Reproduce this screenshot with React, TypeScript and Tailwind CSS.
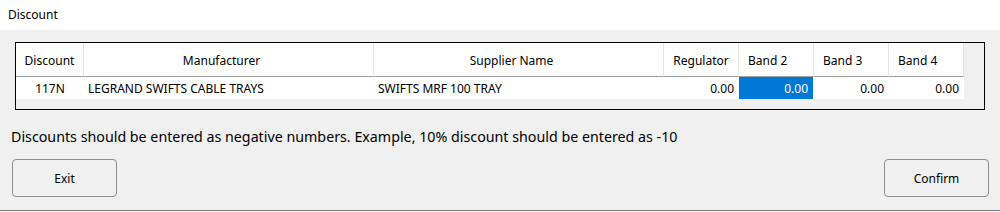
import React from "react";

const cols = [
  { name: "Discount", w: "w-[68px]", h: "justify-center", d: "justify-center", val: "117N" },
  { name: "Manufacturer", w: "w-[290px]", h: "justify-center pr-[14px]", d: "justify-start pl-[4px]", val: "LEGRAND SWIFTS CABLE TRAYS" },
  { name: "Supplier Name", w: "w-[290px]", h: "justify-center pr-[14px]", d: "justify-start pl-[4px]", val: "SWIFTS MRF 100 TRAY" },
  { name: "Regulator", w: "w-[75px]", h: "justify-center", d: "justify-end pr-[5px]", val: "0.00" },
  { name: "Band 2", w: "w-[75px]", h: "justify-start pl-[9px]", d: "justify-end pr-[5px]", val: "0.00", sel: true },
  { name: "Band 3", w: "w-[75px]", h: "justify-start pl-[9px]", d: "justify-end pr-[5px]", val: "0.00" },
  { name: "Band 4", w: "w-[75px]", h: "justify-start pl-[9px]", d: "justify-end pr-[5px]", val: "0.00" },
];

export default function App() {
  return (
    <div
      className="w-[1000px] h-[212px] bg-[#f0f0f0] flex flex-col text-black text-[12px] overflow-hidden"
      style={{ fontFamily: '"Noto Sans", "Segoe UI", sans-serif' }}
    >
      <div className="h-[30px] bg-white flex items-center pl-[8px] shrink-0">Discount</div>
      <div className="mt-[12px] ml-[15px] w-[970px] h-[68px] border border-black bg-[#f0f0f0] shrink-0">
        <div className="flex">
          {cols.map((c) => (
            <div
              key={c.name}
              className={`${c.w} h-[34px] pt-[2px] bg-white border-b border-b-[#a0a0a0] border-r border-r-[#e5e5e5] flex items-center ${c.h}`}
            >
              {c.name}
            </div>
          ))}
        </div>
        <div className="flex">
          {cols.map((c) => (
            <div
              key={c.name}
              className={`${c.w} h-[22px] pt-[1px] flex items-center ${c.d} ${
                c.sel ? "bg-[#0078d7] text-white border-r border-r-white" : "bg-white"
              }`}
            >
              {c.val}
            </div>
          ))}
        </div>
      </div>
      <div className="mt-[17px] h-[20px] leading-[20px] pl-[11px] text-[14.25px] shrink-0">
        Discounts should be entered as negative numbers. Example, 10% discount should be entered as -10
      </div>
      <div className="mt-[12px] flex justify-between pl-[12px] pr-[11px] shrink-0">
        <button className="w-[105px] h-[38px] pt-[2px] border border-[#8f8f8f] rounded-[4px] bg-[#f0f0f0] text-[12px]">
          Exit
        </button>
        <button className="w-[105px] h-[38px] pt-[2px] border border-[#8f8f8f] rounded-[4px] bg-[#f0f0f0] text-[12px]">
          Confirm
        </button>
      </div>
      <div className="mt-[13px] h-px bg-[#7a7a7a] shrink-0" />
    </div>
  );
}
